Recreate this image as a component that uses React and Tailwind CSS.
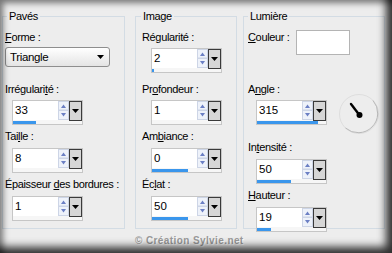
import React from "react";

function Label({ children, className = "" }) {
  return (
    <div className={"h-[13px] leading-[13px] tracking-[-0.35px] whitespace-nowrap " + className}>
      {children}
    </div>
  );
}

function SpinArrows() {
  return (
    <svg width="11" height="19" viewBox="0 0 11 19" className="shrink-0">
      <rect x="0.5" y="0.5" width="10" height="8.5" fill="#eef2fa" stroke="#cdd5e6" />
      <rect x="0.5" y="9.5" width="10" height="9" fill="#eef2fa" stroke="#cdd5e6" />
      <path d="M3 7H8L5.5 3.5Z" fill="#6b7fc4" />
      <path d="M3 12H8L5.5 15.5Z" fill="#6b7fc4" />
    </svg>
  );
}

function Spin({ value, pct, className = "" }) {
  return (
    <div className={"w-[71px] h-[25px] border border-[#c6c6c6] bg-[#f6f6f6] flex flex-col " + className}>
      <div className="flex h-[19px]">
        <div className="w-[45px] h-full bg-white pl-[2px] leading-[19px] text-[11.5px]">{value}</div>
        <SpinArrows />
        <div className="w-[13px] h-[20px] border border-[#3a3a3a] bg-[#d6d6d6] flex items-center justify-center">
          <svg width="7" height="4" viewBox="0 0 7 4">
            <path d="M0 0H7L3.5 4Z" fill="#000" />
          </svg>
        </div>
      </div>
      <div className="h-[4px] pt-[1px]">
        <div className="h-[3px] bg-[#3a96ec]" style={{ width: `${pct}%` }} />
      </div>
    </div>
  );
}

function Group({ title, className = "", legendClass = "", children }) {
  return (
    <fieldset className={"h-[219px] border border-[#d3dce4] pl-[2px] " + className}>
      <legend className={"px-[2px] h-[13px] leading-[13px] tracking-[-0.35px] " + legendClass}>{title}</legend>
      {children}
    </fieldset>
  );
}

export default function App() {
  return (
    <div className="relative w-[392px] h-[253px] overflow-hidden bg-[#ededed] font-['Liberation_Sans',Arial,sans-serif] text-[11px] leading-[13px] text-black">
      <div className="flex pl-[2px] pt-[10px]">
        <Group title="Pavés" className="w-[123px]" legendClass="ml-[2px]">
          <div className="flex flex-col items-start">
            <Label className="mt-[8px]">
              <u>F</u>orme :
            </Label>
            <div className="mt-[3px] w-[105px] h-[20px] border border-[#8e8e8e] rounded-[3px] bg-linear-to-b from-white to-[#e4e4e4] flex items-center pl-[4px] pr-[5px]">
              <span className="flex-1 tracking-[-0.35px] text-[11.5px]">Triangle</span>
              <svg width="7" height="4" viewBox="0 0 7 4">
                <path d="M0 0H7L3.5 4Z" fill="#000" />
              </svg>
            </div>
            <Label className="mt-[16px]">
              Irrégulari<u>t</u>é :
            </Label>
            <Spin value="33" pct={33} className="mt-[4px] ml-[7px]" />
            <Label className="mt-[5px]">
              Tai<u>l</u>le :
            </Label>
            <Spin value="8" pct={0} className="mt-[5px] ml-[7px]" />
            <Label className="mt-[5px]">
              Épaisseur <u>d</u>es bordures :
            </Label>
            <Spin value="1" pct={0} className="mt-[5px] ml-[7px]" />
          </div>
        </Group>

        <Group title="Image" className="w-[102px] ml-[10px]" legendClass="ml-[3px]">
          <div className="flex flex-col items-start pl-[4px]">
            <Label className="mt-[8px]">Régularité :</Label>
            <Spin value="2" pct={3} className="mt-[4px] ml-[9px]" />
            <Label className="mt-[10px]">
              Pr<u>o</u>fondeur :
            </Label>
            <Spin value="1" pct={0} className="mt-[4px] ml-[9px]" />
            <Label className="mt-[5px]">
              Am<u>b</u>iance :
            </Label>
            <Spin value="0" pct={52} className="mt-[5px] ml-[9px]" />
            <Label className="mt-[5px]">
              Éc<u>l</u>at :
            </Label>
            <Spin value="50" pct={52} className="mt-[5px] ml-[9px]" />
          </div>
        </Group>

        <Group title="Lumière" className="w-[142px] ml-[6px]" legendClass="ml-[2px]">
          <div className="flex flex-col items-start pl-[2px]">
            <div className="flex mt-[7px]">
              <Label className="mt-[1px] w-[48px]">
                <u>C</u>ouleur :
              </Label>
              <div className="w-[54px] h-[25px] border border-[#b4b4b4] bg-white" />
            </div>
            <div className="flex mt-[28px]">
              <div className="flex flex-col items-start">
                <Label>
                  A<u>n</u>gle :
                </Label>
                <Spin value="315" pct={88} className="mt-[4px] ml-[8px]" />
              </div>
              <svg width="44" height="44" viewBox="0 0 44 44" className="ml-[10px] mt-[9px]">
                <circle cx="22" cy="22" r="19.5" fill="none" stroke="#dedede" strokeWidth="1" />
                <path d="M36 8.5 A19.5 19.5 0 0 1 8.5 36" fill="none" stroke="#b9b9b9" strokeWidth="1" />
                <line x1="14" y1="12" x2="22" y2="22.5" stroke="#000" strokeWidth="2.4" strokeLinecap="round" />
                <circle cx="22.5" cy="23" r="3" fill="#000" />
              </svg>
            </div>
            <Label className="mt-[5px]">
              In<u>t</u>ensité :
            </Label>
            <Spin value="50" pct={49} className="mt-[5px] ml-[8px]" />
            <Label className="mt-[5px]">
              <u>H</u>auteur :
            </Label>
            <Spin value="19" pct={21} className="mt-[5px] ml-[8px]" />
          </div>
        </Group>
      </div>

      <div className="mt-[6px] pl-[135px] text-[10px] leading-[12px] font-bold text-[#9a9a9a] tracking-[0.4px] [text-shadow:1px_1px_0_#ffffff]">
        © Création Sylvie.net
      </div>

      <div className="pointer-events-none absolute inset-0 shadow-[inset_6px_6px_6px_-3px_rgba(0,0,0,0.5),inset_-12px_-12px_8px_-6px_rgba(0,0,0,0.8)]" />
    </div>
  );
}
